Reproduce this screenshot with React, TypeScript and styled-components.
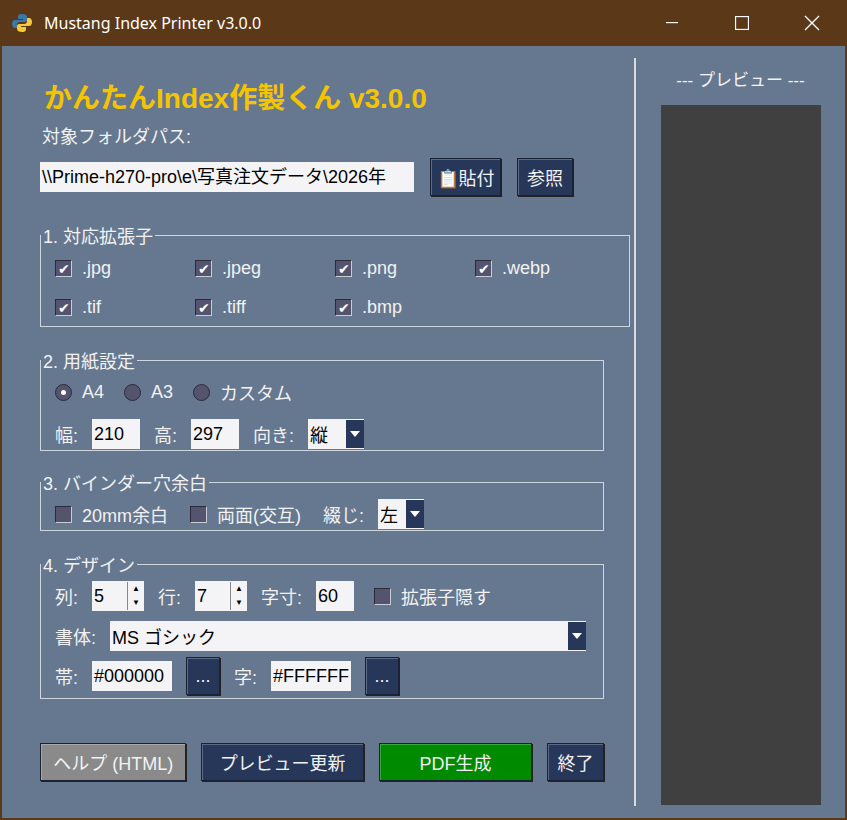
import styled, { createGlobalStyle } from 'styled-components';

const Global = createGlobalStyle`
  html, body { margin: 0; padding: 0; }
  body { font-family: "Liberation Sans", "Noto Sans CJK JP", sans-serif; color: #f2f2f2; }
`;

const Window = styled.div`
  width: 847px;
  height: 820px;
  display: flex;
  flex-direction: column;
  background: #66788f;
  overflow: hidden;
`;

const TitleBar = styled.div`
  height: 46px;
  flex-shrink: 0;
  background: #5a3818;
  display: flex;
  align-items: center;
  padding-left: 12px;
  font-size: 16px;
  color: #fff;
  font-family: "Noto Sans", sans-serif;
`;

const TitleText = styled.span`
  margin-left: 12px;
  flex: 1;
`;

const WinButton = styled.div`
  width: 70px;
  height: 46px;
  display: flex;
  align-items: center;
  justify-content: center;
`;

const Body = styled.div`
  flex: 1;
  display: flex;
  border: 2px solid #5a3818;
  border-top: none;
`;

const Left = styled.div`
  width: 566px;
  padding: 30px 0 0 36px;
  display: flex;
  flex-direction: column;
`;

const Divider = styled.div`
  width: 2px;
  background: #d8dce2;
  margin: 12px 0 12px 30px;
`;

const Right = styled.div`
  flex: 1;
  display: flex;
  flex-direction: column;
  align-items: center;
  padding-top: 20px;
`;

const PreviewTitle = styled.div`
  font-size: 17px;
  margin-bottom: 14px;
`;

const PreviewBox = styled.div`
  width: 160px;
  height: 700px;
  background: #404040;
`;

const Heading = styled.div`
  color: #f5c400;
  font-weight: bold;
  font-size: 28px;
  margin-left: 6px;
  height: 38px;
`;

const Label = styled.span`
  font-size: 18px;
  white-space: nowrap;
`;

const PathLabel = styled(Label)`
  display: block;
  margin: 8px 0 10px 4px;
`;

const PathRow = styled.div`
  display: flex;
  align-items: center;
  gap: 16px;
  margin-left: 2px;
`;

const Input = styled.div<{ w: number }>`
  width: ${p => p.w}px;
  height: 30px;
  box-sizing: border-box;
  background: #f4f4f6;
  color: #000;
  font-size: 18px;
  line-height: 30px;
  padding-left: 2px;
  overflow: hidden;
  white-space: nowrap;
  font-family: "Liberation Sans Narrow", "Liberation Sans", "Noto Sans CJK JP", sans-serif;
`;

const Button = styled.div<{ bg?: string; w: number }>`
  width: ${p => p.w}px;
  height: 38px;
  box-sizing: border-box;
  background: ${p => p.bg || '#27375a'};
  border: 1px solid #1a2233;
  box-shadow: inset 1px 1px 0 rgba(255,255,255,0.25), 1px 1px 0 #222;
  display: flex;
  align-items: center;
  justify-content: center;
  font-size: 18px;
  color: #f2f2f2;
`;

const Group = styled.fieldset<{ h: number }>`
  margin: 26px 0 0 2px;
  width: 564px;
  height: ${p => p.h}px;
  box-sizing: border-box;
  border: 1px solid #d0d6de;
  padding: 4px 14px 0 14px;
  display: flex;
  flex-direction: column;
  gap: 12px;
  legend { font-size: 18px; padding: 0 2px; margin-left: -14px; }
`;

const ExtGrid = styled.div`
  display: grid;
  grid-template-columns: repeat(4, 140px);
  row-gap: 18px;
  margin-top: 6px;
`;

const Row = styled.div`
  display: flex;
  align-items: center;
  gap: 14px;
  height: 30px;
`;

const Check = styled.span<{ checked?: boolean }>`
  width: 17px;
  height: 17px;
  box-sizing: border-box;
  background: #54546e;
  border: 1px solid #2a2a3a;
  border-right-color: #c8ccd4;
  border-bottom-color: #c8ccd4;
  display: inline-flex;
  align-items: center;
  justify-content: center;
  color: #fff;
  font-size: 14px;
  line-height: 1;
  margin-right: 10px;
`;

const CheckItem = styled.label`
  display: flex;
  align-items: center;
  font-size: 18px;
`;

const Radio = styled.span<{ on?: boolean }>`
  width: 15px;
  height: 15px;
  border-radius: 50%;
  background: #54546e;
  border: 1px solid #2a2a3a;
  display: inline-flex;
  align-items: center;
  justify-content: center;
  margin-right: 10px;
  &::after {
    content: '';
    width: 5px;
    height: 5px;
    border-radius: 50%;
    background: ${p => (p.on ? '#fff' : 'transparent')};
  }
`;

const Select = styled.div<{ w: number }>`
  width: ${p => p.w}px;
  height: 30px;
  background: #f4f4f6;
  color: #000;
  font-size: 18px;
  display: flex;
  align-items: center;
  justify-content: space-between;
  padding-left: 2px;
  box-sizing: border-box;
`;

const Arrow = styled.span`
  width: 18px;
  height: 28px;
  background: #27375a;
  display: flex;
  align-items: center;
  justify-content: center;
  &::after {
    content: '';
    border-left: 5px solid transparent;
    border-right: 5px solid transparent;
    border-top: 6px solid #fff;
  }
`;

const Spin = styled.div`
  width: 52px;
  height: 30px;
  background: #f4f4f6;
  color: #000;
  font-size: 18px;
  display: flex;
  align-items: center;
  justify-content: space-between;
  padding-left: 2px;
  box-sizing: border-box;
`;

const SpinArrows = styled.span`
  width: 16px;
  height: 28px;
  display: flex;
  flex-direction: column;
  border-left: 1px solid #888;
  font-size: 8px;
  line-height: 14px;
  text-align: center;
  color: #000;
`;

const Footer = styled.div`
  margin-top: 44px;
  display: flex;
  gap: 15px;
  margin-left: 2px;
`;

export default function App() {
  return (
    <Window>
      <Global />
      <TitleBar>
        <svg width="20" height="20" viewBox="0 0 20 20">
          <path d="M10 1c-4 0-4 2-4 3v2h5v1H3c-2 0-3 2-3 4s1 4 3 4h2v-3c0-2 1-3 3-3h5c1 0 2-1 2-2V4c0-2-2-3-5-3z" fill="#3b77a8" />
          <path d="M10 19c4 0 4-2 4-3v-2H9v-1h8c2 0 3-2 3-4s-1-4-3-4h-2v3c0 2-1 3-3 3H7c-1 0-2 1-2 2v3c0 2 2 3 5 3z" fill="#f5c93a" />
        </svg>
        <TitleText>Mustang Index Printer v3.0.0</TitleText>
        <WinButton><svg width="12" height="2"><rect width="12" height="1.2" fill="#fff" /></svg></WinButton>
        <WinButton><svg width="14" height="14"><rect x="0.5" y="0.5" width="13" height="13" fill="none" stroke="#fff" strokeWidth="1.3" /></svg></WinButton>
        <WinButton><svg width="16" height="16"><path d="M1 1l14 14M15 1L1 15" stroke="#fff" strokeWidth="1.4" /></svg></WinButton>
      </TitleBar>
      <Body>
        <Left>
          <Heading>かんたんIndex作製くん v3.0.0</Heading>
          <PathLabel>対象フォルダパス:</PathLabel>
          <PathRow>
            <Input w={374}>\\Prime-h270-pro\e\写真注文データ\2026年</Input>
            <Button w={71}>📋貼付</Button>
            <Button w={56}>参照</Button>
          </PathRow>
          <Group h={105}>
            <legend>1. 対応拡張子</legend>
            <ExtGrid>
              {['.jpg', '.jpeg', '.png', '.webp', '.tif', '.tiff', '.bmp'].map(e => (
                <CheckItem key={e}><Check>✔</Check>{e}</CheckItem>
              ))}
            </ExtGrid>
          </Group>
          <Group h={104} style={{ marginTop: 20 }}>
            <legend>2. 用紙設定</legend>
            <Row style={{ gap: 20 }}>
              <CheckItem><Radio on />A4</CheckItem>
              <CheckItem><Radio />A3</CheckItem>
              <CheckItem><Radio />カスタム</CheckItem>
            </Row>
            <Row>
              <Label>幅:</Label><Input w={48}>210</Input>
              <Label>高:</Label><Input w={48}>297</Input>
              <Label>向き:</Label><Select w={56}>縦<Arrow /></Select>
            </Row>
          </Group>
          <Group h={62} style={{ marginTop: 18 }}>
            <legend>3. バインダー穴余白</legend>
            <Row style={{ gap: 22 }}>
              <CheckItem><Check />20mm余白</CheckItem>
              <CheckItem><Check />両面(交互)</CheckItem>
              <Label>綴じ:</Label>
              <Select w={46} style={{ marginLeft: -8 }}>左<Arrow /></Select>
            </Row>
          </Group>
          <Group h={148} style={{ marginTop: 20, gap: 10 }}>
            <legend>4. デザイン</legend>
            <Row>
              <Label>列:</Label><Spin>5<SpinArrows><span>▲</span><span>▼</span></SpinArrows></Spin>
              <Label>行:</Label><Spin>7<SpinArrows><span>▲</span><span>▼</span></SpinArrows></Spin>
              <Label>字寸:</Label><Input w={38}>60</Input>
              <CheckItem style={{ marginLeft: 6 }}><Check />拡張子隠す</CheckItem>
            </Row>
            <Row>
              <Label>書体:</Label><Select w={476}>MS ゴシック<Arrow /></Select>
            </Row>
            <Row>
              <Label>帯:</Label><Input w={80}>#000000</Input>
              <Button w={34} style={{ height: 38 }}>...</Button>
              <Label>字:</Label><Input w={80}>#FFFFFF</Input>
              <Button w={34} style={{ height: 38 }}>...</Button>
            </Row>
          </Group>
          <Footer>
            <Button w={147} bg="#8a8a8a">ヘルプ (HTML)</Button>
            <Button w={163}>プレビュー更新</Button>
            <Button w={154} bg="#008a00">PDF生成</Button>
            <Button w={57}>終了</Button>
          </Footer>
        </Left>
        <Divider />
        <Right>
          <PreviewTitle>--- プレビュー ---</PreviewTitle>
          <PreviewBox />
        </Right>
      </Body>
    </Window>
  );
}
